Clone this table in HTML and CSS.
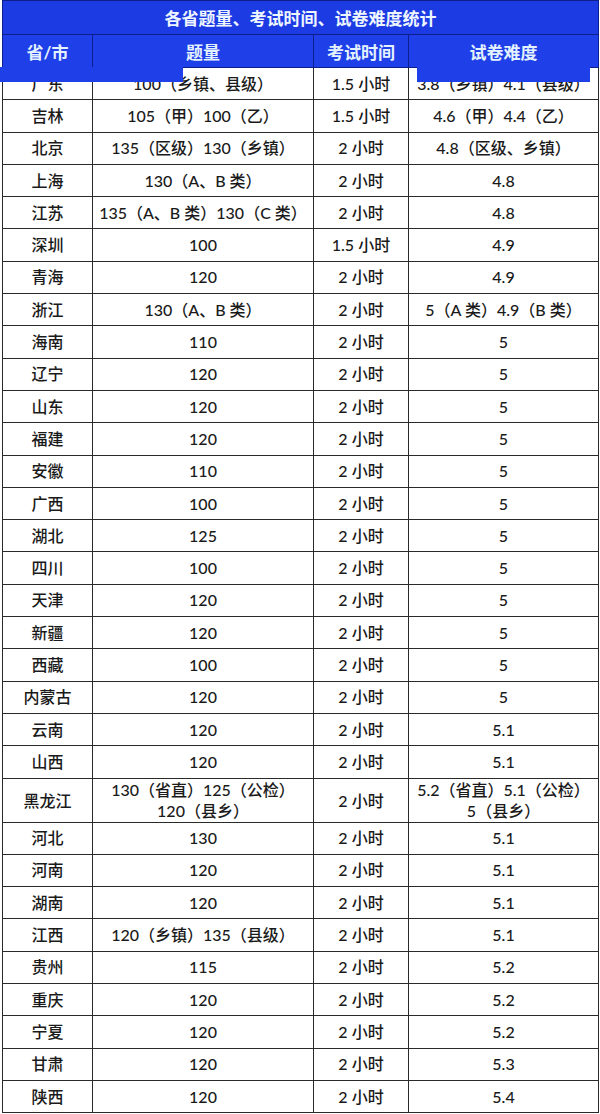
FILE: index.html
```html
<!DOCTYPE html>
<html lang="zh">
<head>
<meta charset="utf-8">
<link rel="stylesheet" href="styles.css">
</head>
<body>
<div class="sheet">
<table class="stats">
  <colgroup>
    <col class="c1"><col class="c2"><col class="c3"><col class="c4">
  </colgroup>
  <thead>
    <tr class="title-row"><th colspan="4">各省题量、考试时间、试卷难度统计</th></tr>
    <tr class="head-row"><th>省/市</th><th>题量</th><th>考试时间</th><th>试卷难度</th></tr>
  </thead>
  <tbody>
    <tr><td>广东</td><td>100（乡镇、县级）</td><td>1.5 小时</td><td>3.8（乡镇）4.1（县级）</td></tr>
    <tr><td>吉林</td><td>105（甲）100（乙）</td><td>1.5 小时</td><td>4.6（甲）4.4（乙）</td></tr>
    <tr><td>北京</td><td>135（区级）130（乡镇）</td><td>2 小时</td><td>4.8（区级、乡镇）</td></tr>
    <tr><td>上海</td><td>130（A、B 类）</td><td>2 小时</td><td>4.8</td></tr>
    <tr><td>江苏</td><td>135（A、B 类）130（C 类）</td><td>2 小时</td><td>4.8</td></tr>
    <tr><td>深圳</td><td>100</td><td>1.5 小时</td><td>4.9</td></tr>
    <tr><td>青海</td><td>120</td><td>2 小时</td><td>4.9</td></tr>
    <tr><td>浙江</td><td>130（A、B 类）</td><td>2 小时</td><td>5（A 类）4.9（B 类）</td></tr>
    <tr><td>海南</td><td>110</td><td>2 小时</td><td>5</td></tr>
    <tr><td>辽宁</td><td>120</td><td>2 小时</td><td>5</td></tr>
    <tr><td>山东</td><td>120</td><td>2 小时</td><td>5</td></tr>
    <tr><td>福建</td><td>120</td><td>2 小时</td><td>5</td></tr>
    <tr><td>安徽</td><td>110</td><td>2 小时</td><td>5</td></tr>
    <tr><td>广西</td><td>100</td><td>2 小时</td><td>5</td></tr>
    <tr><td>湖北</td><td>125</td><td>2 小时</td><td>5</td></tr>
    <tr><td>四川</td><td>100</td><td>2 小时</td><td>5</td></tr>
    <tr><td>天津</td><td>120</td><td>2 小时</td><td>5</td></tr>
    <tr><td>新疆</td><td>120</td><td>2 小时</td><td>5</td></tr>
    <tr><td>西藏</td><td>100</td><td>2 小时</td><td>5</td></tr>
    <tr><td>内蒙古</td><td>120</td><td>2 小时</td><td>5</td></tr>
    <tr><td>云南</td><td>120</td><td>2 小时</td><td>5.1</td></tr>
    <tr><td>山西</td><td>120</td><td>2 小时</td><td>5.1</td></tr>
    <tr class="tall"><td>黑龙江</td><td>130（省直）125（公检）<br>120（县乡）</td><td>2 小时</td><td>5.2（省直）5.1（公检）<br>5（县乡）</td></tr>
    <tr><td>河北</td><td>130</td><td>2 小时</td><td>5.1</td></tr>
    <tr><td>河南</td><td>120</td><td>2 小时</td><td>5.1</td></tr>
    <tr><td>湖南</td><td>120</td><td>2 小时</td><td>5.1</td></tr>
    <tr><td>江西</td><td>120（乡镇）135（县级）</td><td>2 小时</td><td>5.1</td></tr>
    <tr><td>贵州</td><td>115</td><td>2 小时</td><td>5.2</td></tr>
    <tr><td>重庆</td><td>120</td><td>2 小时</td><td>5.2</td></tr>
    <tr><td>宁夏</td><td>120</td><td>2 小时</td><td>5.2</td></tr>
    <tr><td>甘肃</td><td>120</td><td>2 小时</td><td>5.3</td></tr>
    <tr><td>陕西</td><td>120</td><td>2 小时</td><td>5.4</td></tr>
  </tbody>
</table>
<div class="patch patch-left"></div>
<div class="patch patch-right"></div>
</div>
</body>
</html>
```

FILE: styles.css
```css
html, body {
  margin: 0;
  padding: 0;
  background: #ffffff;
}

.sheet {
  position: relative;
  width: 600px;
  height: 1114px;
  padding: 0 2px;
  box-sizing: border-box;
}

.stats {
  width: 596px;
  border-collapse: collapse;
  table-layout: fixed;
  font-family: "Lato", "Noto Sans CJK SC", sans-serif;
  font-size: 16px;
  color: #1a1a1a;
}

.c1 { width: 90px; }
.c2 { width: 221px; }
.c3 { width: 95px; }
.c4 { width: 190px; }

.stats th,
.stats td {
  border: 1px solid #2a2a2a;
  text-align: center;
  vertical-align: middle;
  padding: 0;
}

.stats td {
  height: 31.3px;
  line-height: 20px;
  font-weight: 500;
}

.stats tr.tall td {
  height: 43px;
  line-height: 21px;
}

.title-row th {
  height: 33px;
  background: #1d3be3;
  color: #eef6ff;
  font-size: 17px;
  font-weight: 700;
  border-color: #0d1f8a;
}

.head-row th {
  height: 32px;
  background: #1f40e8;
  color: #e4f2ff;
  font-size: 17px;
  font-weight: 700;
  border-color: #0d1f8a;
}

.patch {
  position: absolute;
  top: 67px;
  height: 15px;
  background: #1f40e8;
}

.patch-left {
  left: 0;
  width: 183px;
}

.patch-right {
  left: 417px;
  width: 173px;
}
```
